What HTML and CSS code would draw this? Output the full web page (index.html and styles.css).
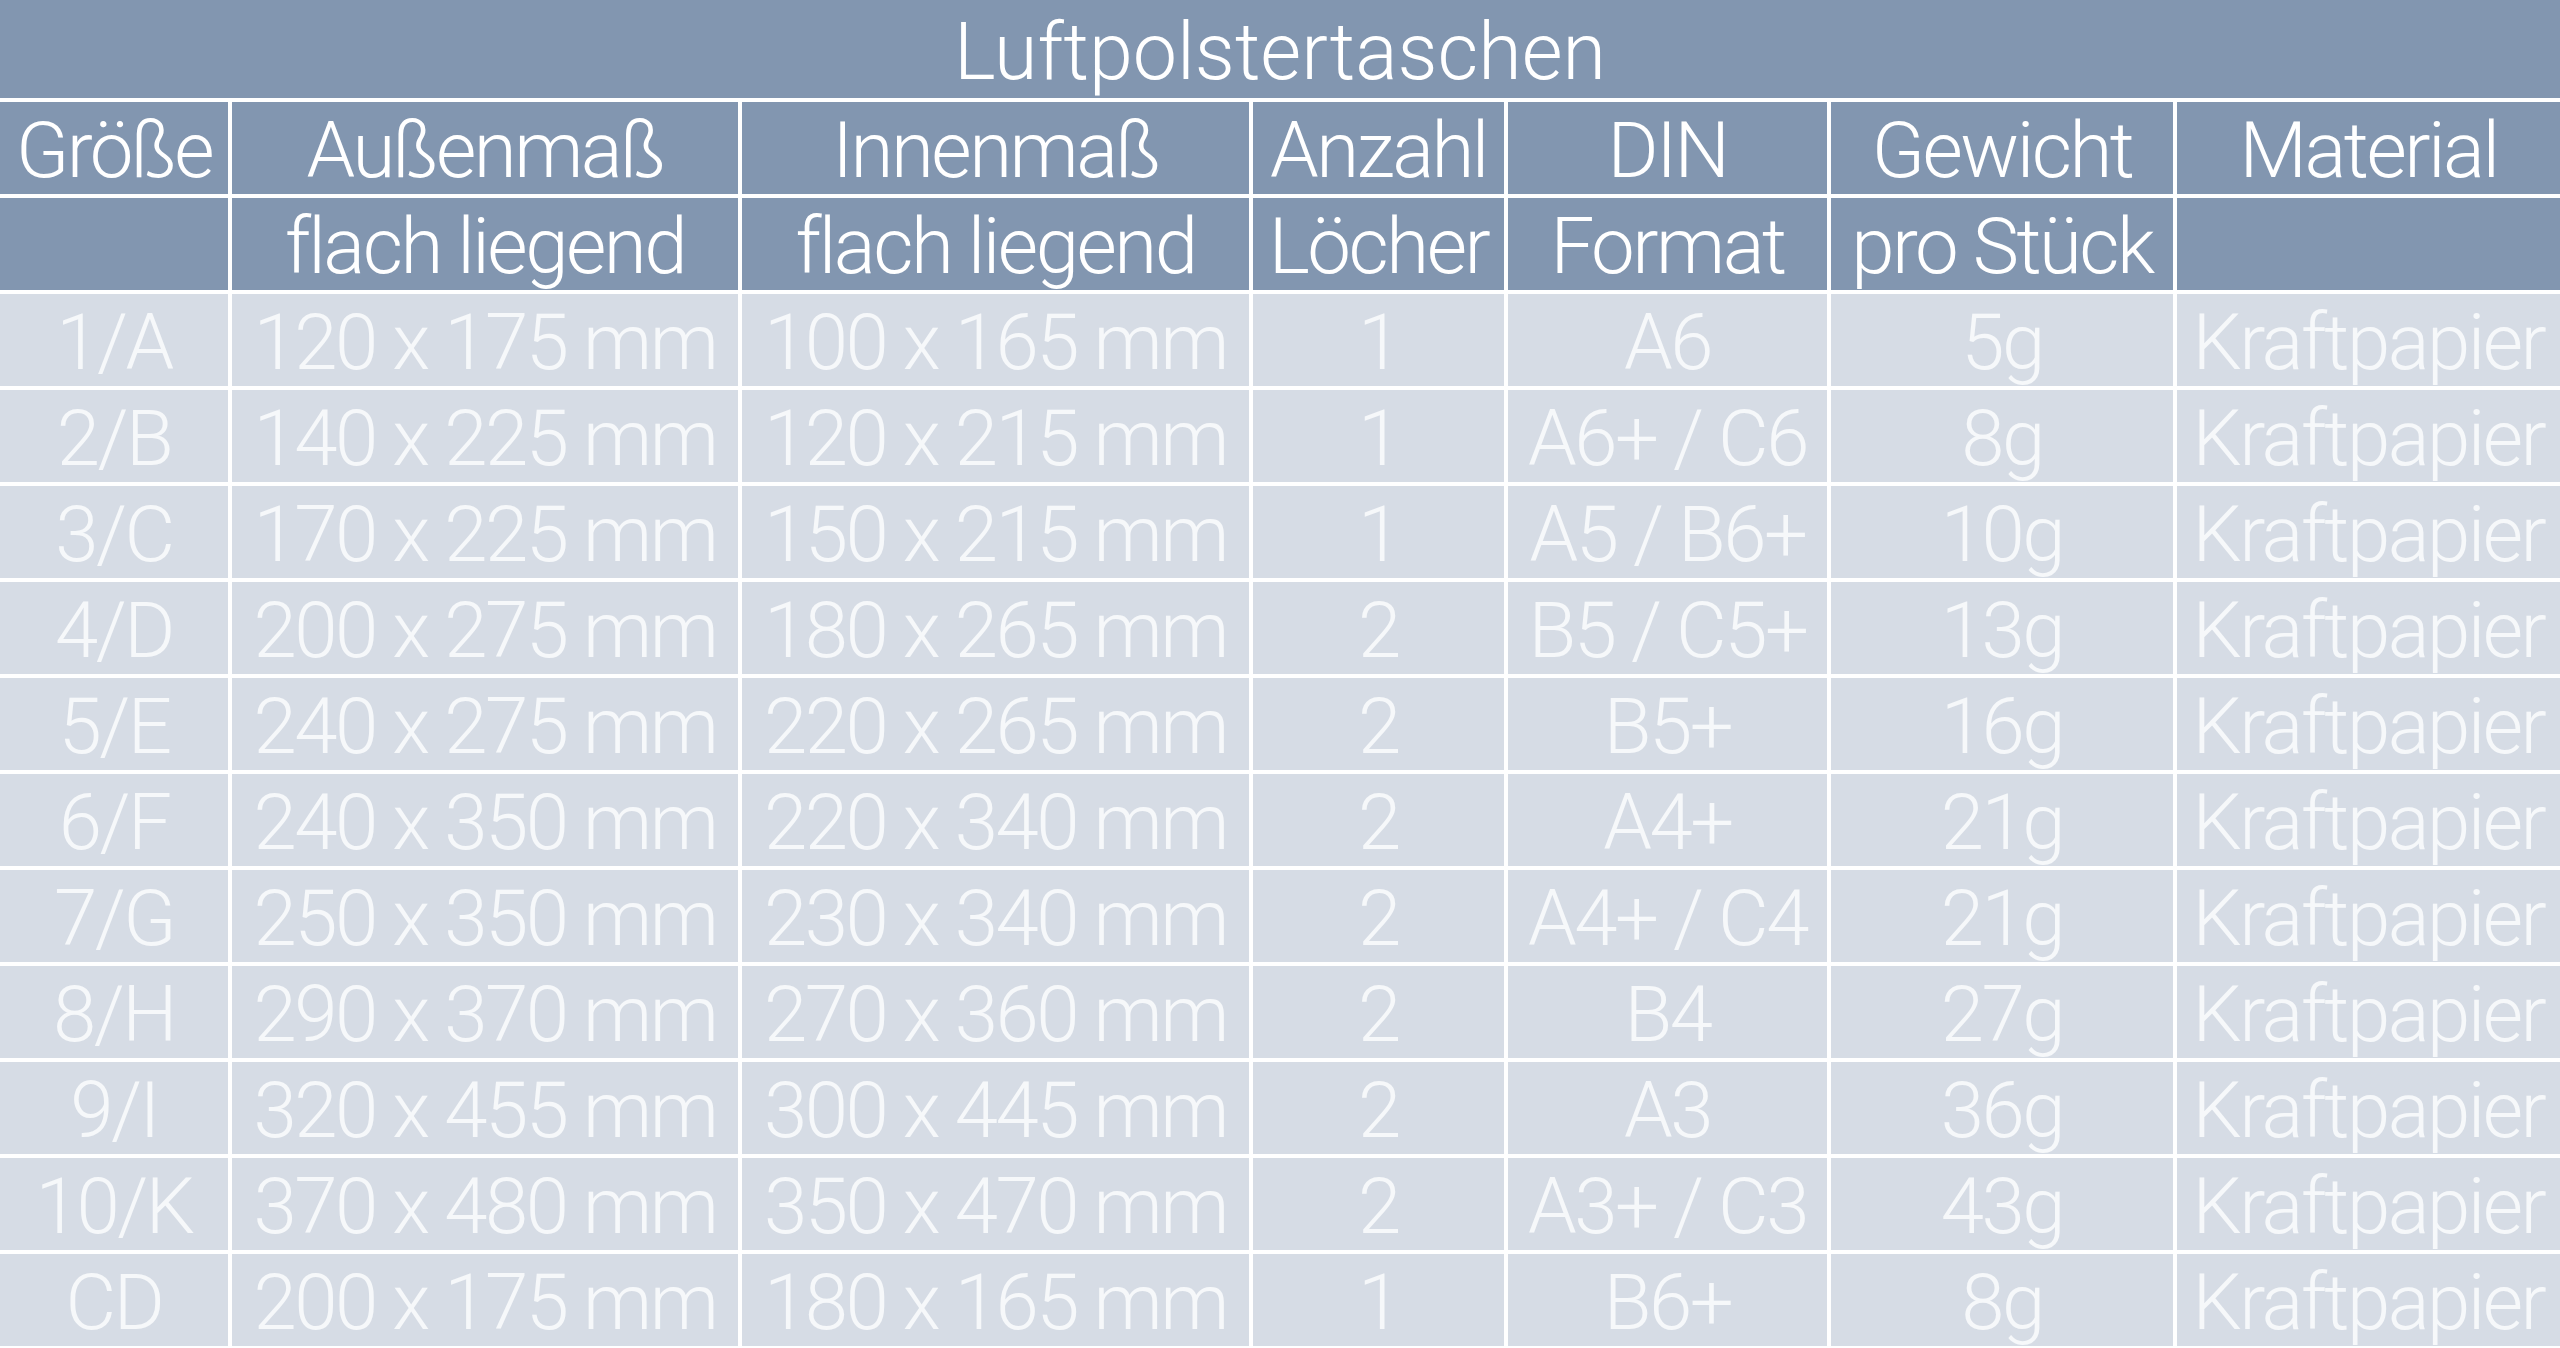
FILE: index.html
```html
<!DOCTYPE html>
<html lang="de">
<head>
<meta charset="utf-8">
<title>Luftpolstertaschen</title>
<link rel="stylesheet" href="styles.css">
</head>
<body>
<div class="sheet">
  <div class="title">Luftpolstertaschen</div>

  <div class="hd">Größe</div>
  <div class="hd">Außenmaß</div>
  <div class="hd">Innenmaß</div>
  <div class="hd">Anzahl</div>
  <div class="hd">DIN</div>
  <div class="hd">Gewicht</div>
  <div class="hd">Material</div>

  <div class="hd"></div>
  <div class="hd">flach liegend</div>
  <div class="hd">flach liegend</div>
  <div class="hd">Löcher</div>
  <div class="hd">Format</div>
  <div class="hd">pro Stück</div>
  <div class="hd"></div>

  <div class="td">1/A</div><div class="td">120 x 175 mm</div><div class="td">100 x 165 mm</div><div class="td">1</div><div class="td">A6</div><div class="td">5g</div><div class="td">Kraftpapier</div>
  <div class="td">2/B</div><div class="td">140 x 225 mm</div><div class="td">120 x 215 mm</div><div class="td">1</div><div class="td">A6+ / C6</div><div class="td">8g</div><div class="td">Kraftpapier</div>
  <div class="td">3/C</div><div class="td">170 x 225 mm</div><div class="td">150 x 215 mm</div><div class="td">1</div><div class="td">A5 / B6+</div><div class="td">10g</div><div class="td">Kraftpapier</div>
  <div class="td">4/D</div><div class="td">200 x 275 mm</div><div class="td">180 x 265 mm</div><div class="td">2</div><div class="td">B5 / C5+</div><div class="td">13g</div><div class="td">Kraftpapier</div>
  <div class="td">5/E</div><div class="td">240 x 275 mm</div><div class="td">220 x 265 mm</div><div class="td">2</div><div class="td">B5+</div><div class="td">16g</div><div class="td">Kraftpapier</div>
  <div class="td">6/F</div><div class="td">240 x 350 mm</div><div class="td">220 x 340 mm</div><div class="td">2</div><div class="td">A4+</div><div class="td">21g</div><div class="td">Kraftpapier</div>
  <div class="td">7/G</div><div class="td">250 x 350 mm</div><div class="td">230 x 340 mm</div><div class="td">2</div><div class="td">A4+ / C4</div><div class="td">21g</div><div class="td">Kraftpapier</div>
  <div class="td">8/H</div><div class="td">290 x 370 mm</div><div class="td">270 x 360 mm</div><div class="td">2</div><div class="td">B4</div><div class="td">27g</div><div class="td">Kraftpapier</div>
  <div class="td">9/I</div><div class="td">320 x 455 mm</div><div class="td">300 x 445 mm</div><div class="td">2</div><div class="td">A3</div><div class="td">36g</div><div class="td">Kraftpapier</div>
  <div class="td">10/K</div><div class="td">370 x 480 mm</div><div class="td">350 x 470 mm</div><div class="td">2</div><div class="td">A3+ / C3</div><div class="td">43g</div><div class="td">Kraftpapier</div>
  <div class="td">CD</div><div class="td">200 x 175 mm</div><div class="td">180 x 165 mm</div><div class="td">1</div><div class="td">B6+</div><div class="td">8g</div><div class="td">Kraftpapier</div>
</div>
</body>
</html>
```

FILE: styles.css
```css
html, body {
  margin: 0;
  padding: 0;
  background: #ffffff;
}

.sheet {
  width: 2560px;
  height: 1348px;
  display: grid;
  grid-template-columns: 228px 506px 507px 251px 319px 342px 383px;
  grid-template-rows: 98px repeat(13, 92px);
  column-gap: 4px;
  row-gap: 4px;
  background: #ffffff;
  font-family: Roboto, "Liberation Sans", Arial, sans-serif;
  font-weight: 300;
  overflow: hidden;
}

.title,
.hd,
.td {
  display: flex;
  align-items: center;
  justify-content: center;
  box-sizing: border-box;
  padding-top: 6px;
  white-space: nowrap;
  line-height: 1;
}

.title {
  grid-column: 1 / -1;
  background: #8296b0;
  color: #ffffff;
  font-size: 79px;
}

.hd {
  background: #8296b0;
  color: #ffffff;
  font-size: 78px;
  letter-spacing: -2.5px;
}

.td {
  background: #d6dce5;
  color: #f6f8fa;
  font-size: 78px;
  letter-spacing: -2.5px;
}
```
